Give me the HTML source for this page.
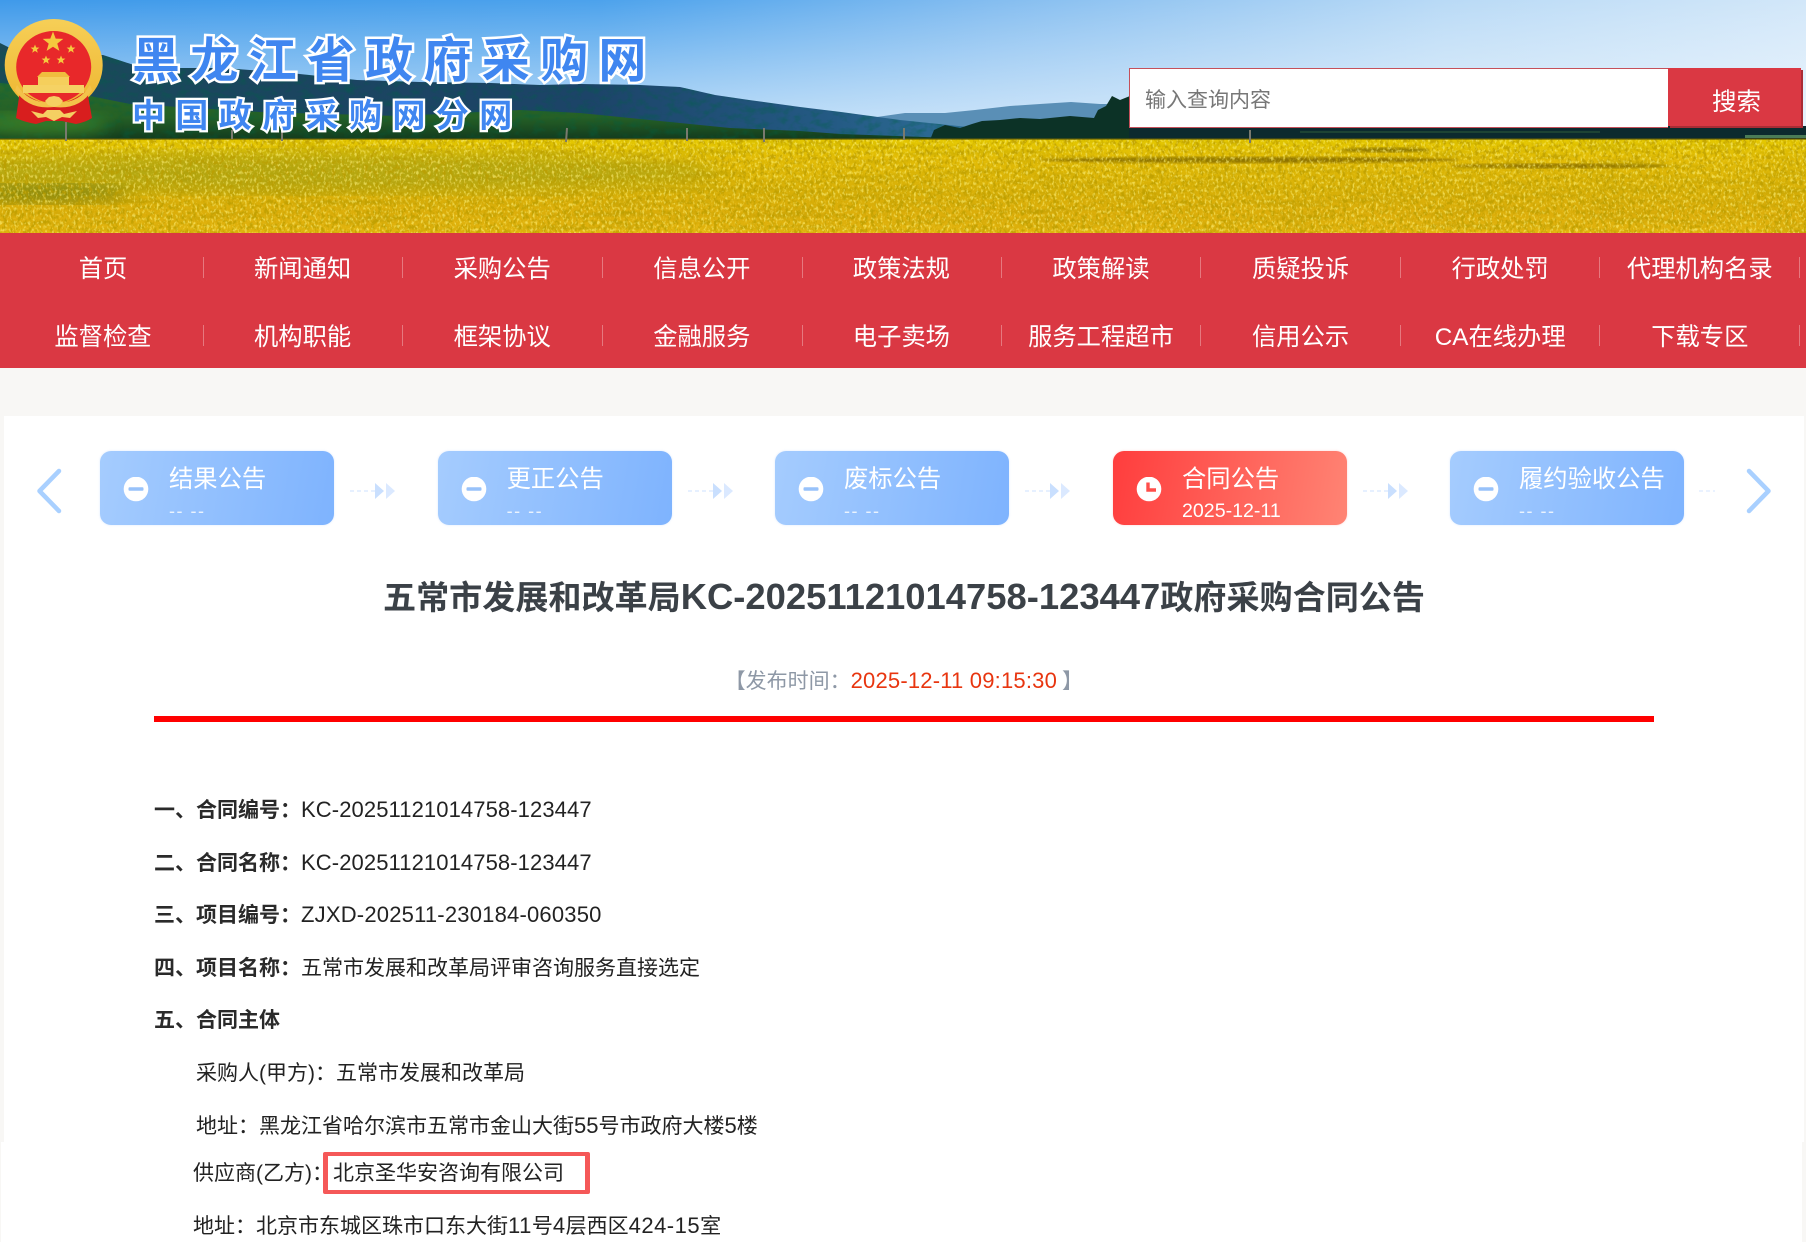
<!DOCTYPE html>
<html lang="zh-CN">
<head>
<meta charset="utf-8">
<title>五常市发展和改革局KC-20251121014758-123447政府采购合同公告</title>
<style>
html,body{margin:0;padding:0;background:#f8f7f5;}
body{position:relative;width:1806px;height:1242px;overflow:hidden;font-family:"Liberation Sans","Noto Sans CJK SC",sans-serif;color:#222;}
.a{position:absolute;white-space:nowrap;}
.nav{position:absolute;left:0;top:233px;width:1806px;height:135px;background:#da3843;}
.n{position:absolute;width:199.6px;height:68px;line-height:68px;text-align:center;color:#fff;font-size:24.3px;margin-left:-.5px;}
.s{position:absolute;width:1px;height:21px;background:rgba(255,255,255,.32);}
.card{position:absolute;top:451px;width:234px;height:74px;border-radius:11px;background:linear-gradient(100deg,#a5ccfe 0%,#7eb3fe 100%);box-shadow:0 0 2px rgba(150,190,250,.35);color:#fff;}
.card.r{background:linear-gradient(100deg,#ff3d3d 0%,#ff8474 100%);box-shadow:0 0 2px rgba(255,120,120,.35);}
.card b{position:absolute;left:69px;top:12px;font-weight:normal;font-size:24.3px;line-height:34px;white-space:nowrap;}
.card i{position:absolute;left:69px;top:47px;font-style:normal;font-size:18px;line-height:26px;white-space:nowrap;letter-spacing:1.5px;opacity:.8;}
.card i.d{opacity:1;font-size:19.6px;letter-spacing:0;top:46px;line-height:28px;}
.card svg{position:absolute;left:23px;top:26px;}
.flow{position:absolute;top:480px;}
.l{position:absolute;white-space:nowrap;font-size:21px;line-height:30px;height:30px;color:#222;}
.l b{font-weight:bold;color:#2a2a2a;}
.lt{font-size:22px;}
</style>
</head>
<body>

<svg class="a" style="left:0;top:0" width="1806" height="233" viewBox="0 0 1806 233">
<defs>
<linearGradient id="sky" x1="0" y1="0" x2="1" y2="0">
<stop offset="0" stop-color="#3f9aea"/><stop offset=".33" stop-color="#4ca2ec"/><stop offset=".55" stop-color="#84bdf0"/><stop offset=".8" stop-color="#b9daf6"/><stop offset="1" stop-color="#d2e7f9"/>
</linearGradient>
<linearGradient id="skyv" x1="0" y1="0" x2="0" y2="1">
<stop offset="0" stop-color="#fff" stop-opacity="0"/><stop offset="1" stop-color="#eef7fd" stop-opacity=".75"/>
</linearGradient>
<linearGradient id="field" x1="0" y1="0" x2="0" y2="1">
<stop offset="0" stop-color="#e4c800"/><stop offset=".2" stop-color="#e2bc06"/><stop offset=".55" stop-color="#d8b008"/><stop offset=".8" stop-color="#dcae0a"/><stop offset="1" stop-color="#e2b40e"/>
</linearGradient>
<linearGradient id="hill1" x1="0" y1="0" x2="980" y2="0" gradientUnits="userSpaceOnUse">
<stop offset="0" stop-color="#1a4a58"/><stop offset=".3" stop-color="#1b4560"/><stop offset=".6" stop-color="#1c4468"/><stop offset=".85" stop-color="#245a84"/><stop offset="1" stop-color="#2f7098"/>
</linearGradient>
<linearGradient id="hill2" x1="0" y1="0" x2="0" y2="1">
<stop offset="0" stop-color="#2a6a2a"/><stop offset=".6" stop-color="#256026"/><stop offset="1" stop-color="#123a1e"/>
</linearGradient>
<filter id="streak" x="0" y="0" width="100%" height="100%">
<feTurbulence type="fractalNoise" baseFrequency="0.012 0.16" numOctaves="3" seed="7"/>
<feColorMatrix type="matrix" values="0 0 0 0 .36  0 0 0 0 .28  0 0 0 0 0  1.9 1.9 0 0 -1.85"/>
</filter>
<filter id="grain" x="0" y="0" width="100%" height="100%">
<feTurbulence type="fractalNoise" baseFrequency="0.28 0.2" numOctaves="3" seed="11"/>
<feColorMatrix type="matrix" values="0 0 0 0 .5  0 0 0 0 .34  0 0 0 0 0  3.4 0 3.4 0 -3.3"/>
</filter>
<filter id="grainb" x="0" y="0" width="100%" height="100%">
<feTurbulence type="fractalNoise" baseFrequency="0.42 0.28" numOctaves="2" seed="23"/>
<feColorMatrix type="matrix" values="0 0 0 0 1  0 0 0 0 .9  0 0 0 0 .2  0 4 0 0 -2.05"/>
</filter>
<filter id="bl"><feGaussianBlur stdDeviation="8"/></filter>
<filter id="bl2"><feGaussianBlur stdDeviation="1"/></filter>
<filter id="hn" x="0" y="0" width="100%" height="100%">
<feTurbulence type="fractalNoise" baseFrequency="0.09 0.14" numOctaves="3" seed="5"/>
<feColorMatrix type="matrix" values="0 0 0 0 0  0 0 0 0 .12  0 0 0 0 .06  1.9 0 0 0 -.85"/>
<feComposite in2="SourceGraphic" operator="in"/>
</filter>
<linearGradient id="gold" x1="0" y1="0" x2="0" y2="1"><stop offset="0" stop-color="#f6cf57"/><stop offset="1" stop-color="#eeb52f"/></linearGradient>
</defs>

<rect width="1806" height="140" fill="url(#sky)"/>
<rect width="1806" height="140" fill="url(#skyv)"/>

<!-- distant mountain -->
<path d="M870 118 L905 113 L945 113 L975 110 L1010 106 L1040 104 L1071 102 L1100 104 L1130 104 L1130 140 L870 140Z" fill="#5a8fb6"/>
<!-- main hill -->
<path d="M0 43 L14 50 L60 54 L103 55 L134 65 L180 68 L223 68 L290 73 L357 80 L420 82 L491 83 L540 85 L580 84 L640 85 L680 87 L715 95 L749 100 L800 107 L841 112 L900 120 L968 127 L980 140 L0 140Z" fill="url(#hill1)"/>
<path d="M0 43 L14 50 L60 54 L103 55 L134 65 L180 68 L223 68 L290 73 L357 80 L420 82 L491 83 L540 85 L580 84 L640 85 L680 87 L715 95 L749 100 L800 107 L841 112 L900 120 L968 127 L980 140 L0 140Z" fill="#123" filter="url(#hn)" opacity=".55"/>
<!-- front green hills -->
<path d="M0 83 L50 88 L130 104 L260 112 L400 116 L480 112 L520 110 L580 113 L650 120 L730 128 L800 131 L840 134 L980 139 L0 140Z" fill="url(#hill2)"/>
<path d="M0 83 L50 88 L130 104 L260 112 L400 116 L480 112 L520 110 L580 113 L650 120 L730 128 L800 131 L840 134 L980 139 L0 140Z" fill="#000" filter="url(#hn)" opacity=".5"/>
<ellipse cx="40" cy="125" rx="70" ry="12" fill="#4c9a2a" opacity=".55" filter="url(#bl)"/>
<!-- trees -->
<path d="M930 140 L934 130 L945 125 L960 128 L972 124 L982 121 L1000 120 L1020 118 L1040 119 L1070 116 L1094 118 L1098 110 L1106 106 L1112 96 L1120 100 L1130 96 L1130 128 L1806 128 L1806 140Z" fill="#0c3226"/>
<rect x="1129" y="126" width="677" height="14" fill="#0c2a2e"/>
<rect x="1300" y="131" width="300" height="2" fill="#2d5c3a" opacity=".5"/>
<rect x="1745" y="135" width="61" height="3" fill="#66a06a" opacity=".7"/>

<!-- field -->
<rect y="139" width="1806" height="94" fill="url(#field)"/>
<ellipse cx="300" cy="172" rx="420" ry="20" fill="#8f9a1c" opacity=".5" filter="url(#bl)"/>
<ellipse cx="40" cy="194" rx="90" ry="9" fill="#5f7516" opacity=".7" filter="url(#bl)"/>
<ellipse cx="1250" cy="160" rx="210" ry="3" fill="#7a6205" opacity=".8" filter="url(#bl2)"/>
<ellipse cx="1560" cy="166" rx="110" ry="2.5" fill="#7a6205" opacity=".75" filter="url(#bl2)"/>
<ellipse cx="1385" cy="150" rx="45" ry="2.5" fill="#6a5a05" opacity=".7" filter="url(#bl2)"/>
<rect y="139" width="1806" height="94" filter="url(#streak)" opacity=".3"/>
<rect y="139" width="1806" height="94" filter="url(#grain)" opacity=".75"/>
<rect y="139" width="1806" height="94" filter="url(#grainb)" opacity=".6"/>
<rect y="138" width="1806" height="2" fill="#5e5a08" opacity=".6"/>

<!-- poles -->
<g stroke="#7a7a6e" stroke-width="2">
<path d="M66 122V141"/><path d="M232 130V139"/><path d="M282 130V141"/><path d="M567 128L566 142"/><path d="M687 128V141"/><path d="M764 128V142"/><path d="M904 128V140"/><path d="M1250 130V143"/>
</g>

<!-- emblem -->
<ellipse cx="53.7" cy="65" rx="49" ry="46" fill="url(#gold)"/>
<path d="M20 90 L16 118 Q24 122 36 124 L46 121 L62 121 L76 124 Q86 122 92 118 L87 90 Q54 118 20 90Z" fill="#d81e1e"/>
<ellipse cx="53.7" cy="67" rx="37.5" ry="36" fill="#e8282a"/>
<path d="M17 85 Q30 105 54 102 Q78 105 90 85 L92 90 Q80 110 54 107 Q28 110 15 90Z" fill="#f3c24a"/>
<path d="M31 111 L43 114 L47 110 L60 110 L64 114 L77 111 L70 118 L62 117 L54 121 L46 117 L38 118Z" fill="#f5cf62"/>
<path d="M45 101 L49 97 L54 96 L59 97 L63 101 L60 105 L54 107 L48 105Z" fill="#f5cf62"/>
<rect x="23" y="85" width="61" height="8" fill="#f5d264"/>
<rect x="38" y="77" width="31" height="8" fill="#f5cf5c"/>
<path d="M37 77 L42 72 L65 72 L70 77Z" fill="#f0bd3e"/>
<g fill="#f5c93e">
<path d="M53 31.5l2.7 7.1 7.6.3-6 4.700 2.100 7.300-6.400-4.200-6.400 4.200 2.100-7.300-6-4.700 7.600-.3z"/>
<path d="M35 44.500l1.200 3 3.200.1-2.500 2 .9 3.100-2.800-1.800-2.800 1.800.9-3.100-2.500-2 3.200-.1z"/>
<path d="M71 44.500l1.200 3 3.200.1-2.500 2 .9 3.100-2.800-1.800-2.800 1.800.9-3.100-2.500-2 3.200-.1z"/>
<path d="M46 55.500l1.200 3 3.200.1-2.500 2 .9 3.100-2.800-1.800-2.800 1.800.9-3.100-2.500-2 3.200-.1z"/>
<path d="M61 55.500l1.200 3 3.200.1-2.500 2 .9 3.100-2.800-1.800-2.800 1.800.9-3.100-2.500-2 3.200-.1z"/>
</g>

<!-- logo text -->
<g font-family="'Noto Sans CJK SC','WenQuanYi Zen Hei',sans-serif" font-weight="700" style="paint-order:stroke fill" stroke="#fff" stroke-linejoin="miter">
<text x="132" y="77" font-size="48" letter-spacing="10.3" fill="#3f86f0" stroke-width="5">黑龙江省政府采购网</text>
<text x="132" y="127" font-size="33" letter-spacing="10.4" fill="#3f86f0" stroke-width="4.5">中国政府采购网分网</text>
</g>
</svg>

<!-- search -->
<div class="a" style="left:1129px;top:68px;width:539px;height:60px;box-sizing:border-box;background:#fff;border:1.5px solid #c5505a;border-right:0;"></div>
<div class="a" style="left:1145px;top:84px;font-size:21px;line-height:34px;color:#777;">输入查询内容</div>
<div class="a" style="left:1668px;top:68px;width:133px;height:58px;background:#da3843;box-shadow:2px 2px 0 #a92c35;"></div>
<div class="a" style="left:1712px;top:85px;font-size:24.5px;line-height:36px;color:#fff;">搜索</div>

<!-- nav -->
<div class="nav"></div>
<div class="n" style="left:3.7px;top:236px">首页</div>
<div class="n" style="left:203.3px;top:236px">新闻通知</div>
<div class="n" style="left:402.9px;top:236px">采购公告</div>
<div class="n" style="left:602.5px;top:236px">信息公开</div>
<div class="n" style="left:802.1px;top:236px">政策法规</div>
<div class="n" style="left:1001.7px;top:236px">政策解读</div>
<div class="n" style="left:1201.3px;top:236px">质疑投诉</div>
<div class="n" style="left:1400.9px;top:236px">行政处罚</div>
<div class="n" style="left:1600.5px;top:236px">代理机构名录</div>
<div class="n" style="left:3.7px;top:304px">监督检查</div>
<div class="n" style="left:203.3px;top:304px">机构职能</div>
<div class="n" style="left:402.9px;top:304px">框架协议</div>
<div class="n" style="left:602.5px;top:304px">金融服务</div>
<div class="n" style="left:802.1px;top:304px">电子卖场</div>
<div class="n" style="left:1001.7px;top:304px">服务工程超市</div>
<div class="n" style="left:1201.3px;top:304px">信用公示</div>
<div class="n" style="left:1400.9px;top:304px">CA在线办理</div>
<div class="n" style="left:1600.5px;top:304px">下载专区</div>

<div class="s" style="left:203px;top:257px"></div><div class="s" style="left:402px;top:257px"></div><div class="s" style="left:602px;top:257px"></div><div class="s" style="left:802px;top:257px"></div><div class="s" style="left:1001px;top:257px"></div><div class="s" style="left:1200px;top:257px"></div><div class="s" style="left:1400px;top:257px"></div><div class="s" style="left:1599px;top:257px"></div><div class="s" style="left:1799px;top:257px"></div>
<div class="s" style="left:203px;top:325px"></div><div class="s" style="left:402px;top:325px"></div><div class="s" style="left:602px;top:325px"></div><div class="s" style="left:802px;top:325px"></div><div class="s" style="left:1001px;top:325px"></div><div class="s" style="left:1200px;top:325px"></div><div class="s" style="left:1400px;top:325px"></div><div class="s" style="left:1599px;top:325px"></div><div class="s" style="left:1799px;top:325px"></div>

<!-- content panels -->
<div class="a" style="left:4px;top:416px;width:1800px;height:726px;background:#fff;"></div>
<div class="a" style="left:1px;top:1142px;width:1801px;height:100px;background:#fff;"></div>

<!-- chevrons -->
<svg class="a" style="left:34px;top:466px" width="30" height="50" viewBox="0 0 30 50"><path d="M25 5 L5.500 25 L25 45" fill="none" stroke="#a9d0ff" stroke-width="4.500" stroke-linecap="round" stroke-linejoin="round"/></svg>
<svg class="a" style="left:1744px;top:466px" width="30" height="50" viewBox="0 0 30 50"><path d="M5 5 L24.500 25 L5 45" fill="none" stroke="#a9d0ff" stroke-width="4.500" stroke-linecap="round" stroke-linejoin="round"/></svg>

<!-- step cards -->
<div class="card" style="left:100px">
<svg width="26" height="26" viewBox="0 0 26 26"><circle cx="13" cy="12" r="12.300" fill="#fff"/><rect x="5.500" y="10.300" width="15" height="3.400" rx="1" fill="#98c2fa"/></svg>
<b>结果公告</b><i>-- --</i></div>
<div class="card" style="left:437.600px">
<svg width="26" height="26" viewBox="0 0 26 26"><circle cx="13" cy="12" r="12.300" fill="#fff"/><rect x="5.500" y="10.300" width="15" height="3.400" rx="1" fill="#98c2fa"/></svg>
<b>更正公告</b><i>-- --</i></div>
<div class="card" style="left:775px">
<svg width="26" height="26" viewBox="0 0 26 26"><circle cx="13" cy="12" r="12.300" fill="#fff"/><rect x="5.500" y="10.300" width="15" height="3.400" rx="1" fill="#98c2fa"/></svg>
<b>废标公告</b><i>-- --</i></div>
<div class="card r" style="left:1113px">
<svg width="26" height="26" viewBox="0 0 26 26"><circle cx="13" cy="12" r="12.300" fill="#fff"/><path d="M12 5.500V13H20" fill="none" stroke="#ff4e4a" stroke-width="3.400"/></svg>
<b>合同公告</b><i class="d">2025-12-11</i></div>
<div class="card" style="left:1450px">
<svg width="26" height="26" viewBox="0 0 26 26"><circle cx="13" cy="12" r="12.300" fill="#fff"/><rect x="5.500" y="10.300" width="15" height="3.400" rx="1" fill="#98c2fa"/></svg>
<b>履约验收公告</b><i>-- --</i></div>

<!-- flow arrows -->
<svg class="flow" style="left:350px" width="46" height="22" viewBox="0 0 46 22"><path d="M0 11H25" stroke="#e6f0ff" stroke-width="2" stroke-dasharray="4 3"/><path d="M25 3 L34 11 L25 19Z" fill="#c9dffe"/><path d="M36 3 L45 11 L36 19Z" fill="#dbe9ff"/></svg>
<svg class="flow" style="left:688px" width="46" height="22" viewBox="0 0 46 22"><path d="M0 11H25" stroke="#e6f0ff" stroke-width="2" stroke-dasharray="4 3"/><path d="M25 3 L34 11 L25 19Z" fill="#c9dffe"/><path d="M36 3 L45 11 L36 19Z" fill="#dbe9ff"/></svg>
<svg class="flow" style="left:1025px" width="46" height="22" viewBox="0 0 46 22"><path d="M0 11H25" stroke="#e6f0ff" stroke-width="2" stroke-dasharray="4 3"/><path d="M25 3 L34 11 L25 19Z" fill="#c9dffe"/><path d="M36 3 L45 11 L36 19Z" fill="#dbe9ff"/></svg>
<svg class="flow" style="left:1363px" width="46" height="22" viewBox="0 0 46 22"><path d="M0 11H25" stroke="#e6f0ff" stroke-width="2" stroke-dasharray="4 3"/><path d="M25 3 L34 11 L25 19Z" fill="#c9dffe"/><path d="M36 3 L45 11 L36 19Z" fill="#dbe9ff"/></svg>
<svg class="flow" style="left:1699px" width="18" height="22" viewBox="0 0 18 22"><path d="M0 11H16" stroke="#eaf2ff" stroke-width="2" stroke-dasharray="4 3"/></svg>

<!-- title -->
<div class="a" style="left:383px;top:573px;font-size:33.1px;line-height:48px;font-weight:bold;color:#3b4147;">五常市发展和改革局<span style="font-size:36.4px">KC-20251121014758-123447</span>政府采购合同公告</div>

<!-- date -->
<div class="l" style="left:724.6px;top:666px;color:#8e98a6;">【发布时间：<span class="lt" style="color:#e8350f;letter-spacing:.2px">2025-12-11 09:15:30</span><span style="display:inline-block;width:5px"></span>】</div>
<div class="a" style="left:154px;top:716px;width:1500px;height:6px;background:#f00;"></div>

<!-- body -->
<div class="l" style="left:154px;top:795px"><b>一、合同编号：</b><span class="lt" style="letter-spacing:.1px">KC-20251121014758-123447</span></div>
<div class="l" style="left:154px;top:848px"><b>二、合同名称：</b><span class="lt" style="letter-spacing:.1px">KC-20251121014758-123447</span></div>
<div class="l" style="left:154px;top:900px"><b>三、项目编号：</b><span class="lt" style="letter-spacing:.2px">ZJXD-202511-230184-060350</span></div>
<div class="l" style="left:154px;top:954px"><b>四、项目名称：</b>五常市发展和改革局评审咨询服务直接选定</div>
<div class="l" style="left:154px;top:1006px"><b>五、合同主体</b></div>
<div class="l" style="left:196px;top:1059px">采购人(甲方)：五常市发展和改革局</div>
<div class="l" style="left:196px;top:1111px">地址：黑龙江省哈尔滨市五常市金山大街<span class="lt">55</span>号市政府大楼<span class="lt">5</span>楼</div>
<div class="l" style="left:193px;top:1159px;">供应商(乙方)：</div>
<div class="a" style="left:323px;top:1152px;width:267px;height:42px;box-sizing:border-box;border:solid #f55858;border-width:4px 5.5px;border-radius:2px;background:#fff;"></div>
<div class="l" style="left:333px;top:1159px">北京圣华安咨询有限公司</div>
<div class="l" style="left:193px;top:1211px">地址：北京市东城区珠市口东大街<span class="lt" style="letter-spacing:.5px">11</span>号<span class="lt" style="letter-spacing:.5px">4</span>层西区<span class="lt" style="letter-spacing:.5px">424-15</span>室</div>

</body>
</html>
